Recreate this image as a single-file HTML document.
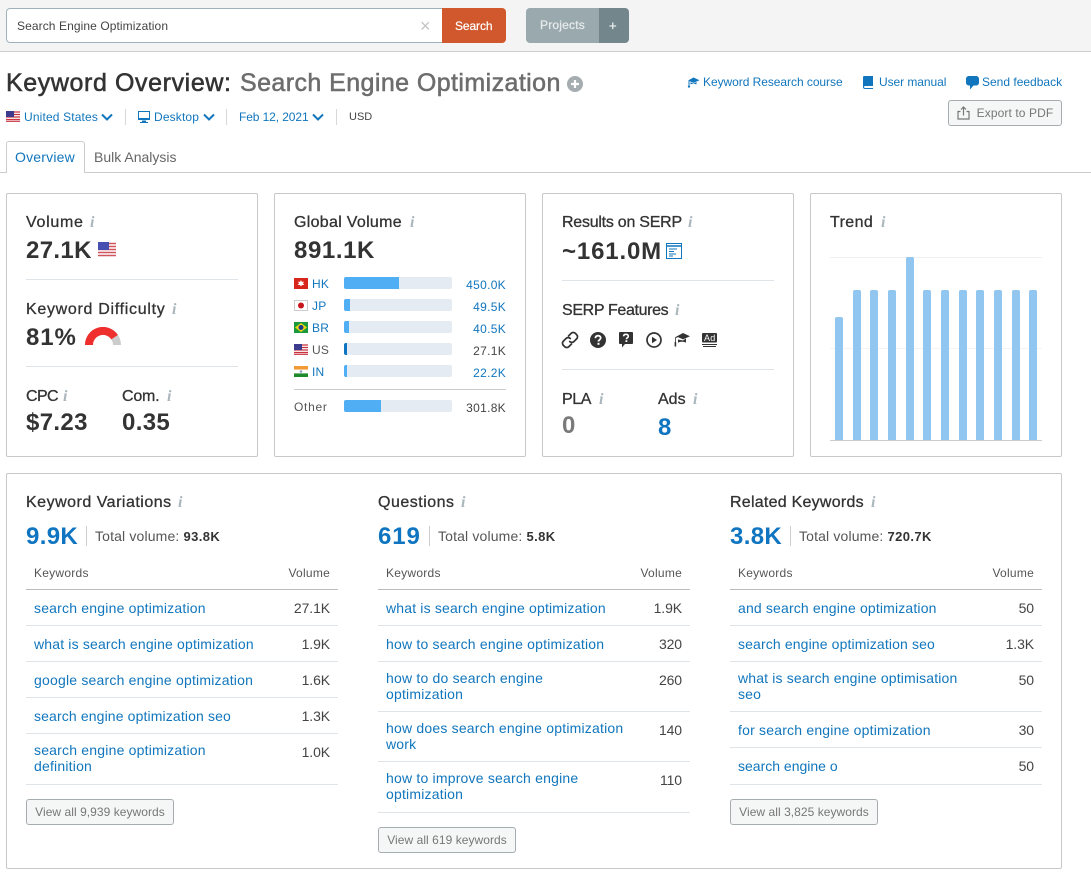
<!DOCTYPE html>
<html><head><meta charset="utf-8"><style>
html,body{margin:0;padding:0;background:#fff}
body{position:relative;width:1091px;height:874px;overflow:hidden;font-family:"Liberation Sans",sans-serif;color:#333}
.a{position:absolute;box-sizing:border-box}
.t{position:absolute;white-space:nowrap;line-height:16px;font-size:14px;letter-spacing:.2px}
.h{font-size:16px;letter-spacing:.55px;color:#333;-webkit-text-stroke:.3px #333}
.b{font-size:24px;font-weight:bold;line-height:28px;letter-spacing:.35px;color:#333}
.i{position:absolute;font:italic bold 16px/16px "Liberation Serif",serif;color:#a9b6bb}
.c{position:absolute;box-sizing:border-box;background:#fff;border:1px solid #c8c8c8;border-radius:2px}
.d{position:absolute;height:1px;background:#dfe4e8}
.n{font-size:12px;letter-spacing:.3px;text-align:right;width:70px;color:#444}
.r{text-align:right;width:60px;color:#444}
.k{font-size:12px;letter-spacing:.25px;color:#555}
.l,.n.l{color:#1176bd}
.tr{position:absolute;left:344px;width:108px;height:12px;background:#e5ebf2;border-radius:2px;overflow:hidden}
.tr i{display:block;height:12px;background:#50aef4}
.bar{position:absolute;width:8px;background:#90c6ef;border-radius:2px 2px 0 0;bottom:434px}
.btn{position:absolute;box-sizing:border-box;height:26px;border:1px solid #a5adb0;border-radius:3px;background:#f5f6f6;color:#777;font-size:12px;letter-spacing:.05px;line-height:24px;text-align:center;white-space:nowrap}
svg{position:absolute;display:block}
</style></head><body>

<div class="a" style="left:0;top:0;width:1091px;height:52px;background:#f4f4f4;border-bottom:1px solid #cfcfcf"></div>
<div class="a" style="left:6px;top:8px;width:440px;height:35px;background:#fff;border:1px solid #9fb2bc;border-radius:4px 0 0 4px"></div>
<div class="t" style="left:17px;top:18px;font-size:12px;letter-spacing:.09px;color:#444">Search Engine Optimization</div>
<div class="t" style="left:420px;top:18px;font-size:18px;color:#c4c4c4;letter-spacing:0">×</div>
<div class="a" style="left:442px;top:8px;width:64px;height:35px;background:#d0582c;border-radius:0 4px 4px 0"></div>
<div class="t" style="left:455px;top:18px;font-size:12px;letter-spacing:-.1px;color:#fff;-webkit-text-stroke:.2px #fff">Search</div>
<div class="a" style="left:526px;top:8px;width:73px;height:35px;background:#9aa9ae;border-radius:4px 0 0 4px"></div>
<div class="a" style="left:599px;top:8px;width:30px;height:35px;background:#73868c;border-radius:0 4px 4px 0"></div>
<div class="t" style="left:540px;top:17px;font-size:12px;letter-spacing:.2px;color:#e6ebec;-webkit-text-stroke:.25px #e6ebec">Projects</div>
<div class="t" style="left:609px;top:18px;font-size:13px;color:#e6ebec;letter-spacing:0;-webkit-text-stroke:.3px #e6ebec">+</div>

<div class="t" style="left:6px;top:68px;font-size:25px;line-height:30px;letter-spacing:.6px;color:#333;-webkit-text-stroke:.55px #333">Keyword Overview:</div>
<div class="t" style="left:240px;top:68px;font-size:25px;line-height:30px;letter-spacing:.42px;color:#6d6d6d;-webkit-text-stroke:.55px #6d6d6d">Search Engine Optimization</div>
<svg style="left:567px;top:76px" width="16" height="16" viewBox="0 0 16 16"><circle cx="8" cy="8" r="8" fill="#a5adb0"/><path d="M8 4v8M4 8h8" stroke="#fff" stroke-width="2.2"/></svg>

<svg style="left:6px;top:111px" width="14" height="11" viewBox="0 0 14 11"><rect width="14" height="11" fill="#fff"/><path d="M0 1h14M0 3.500h14M0 6h14M0 8.500h14M0 10.300h14" stroke="#c8313e" stroke-width="1.200"/><rect width="8" height="6" fill="#3c3b8e"/></svg>
<div class="t l" style="left:24px;top:109px;font-size:12px;letter-spacing:.15px">United States</div>
<svg style="left:101px;top:113px" width="12" height="8" viewBox="0 0 12 8"><path d="M1 1.500l5 5 5-5" fill="none" stroke="#1176bd" stroke-width="2"/></svg>
<div class="a" style="left:125px;top:109px;width:1px;height:16px;background:#d8d8d8"></div>
<svg style="left:138px;top:111px" width="13" height="13" viewBox="0 0 13 13"><path d="M0 0h12v9H0z" fill="#1176bd"/><path d="M1 1h10v6H1z" fill="#fff"/><path d="M4 9.500h4V11h2v1H2v-1h2z" fill="#1176bd"/></svg>
<div class="t l" style="left:154px;top:109px;font-size:12px;letter-spacing:.15px">Desktop</div>
<svg style="left:203px;top:113px" width="12" height="8" viewBox="0 0 12 8"><path d="M1 1.500l5 5 5-5" fill="none" stroke="#1176bd" stroke-width="2"/></svg>
<div class="a" style="left:226px;top:109px;width:1px;height:16px;background:#d8d8d8"></div>
<div class="t l" style="left:239px;top:109px;font-size:12px;letter-spacing:-.1px">Feb 12, 2021</div>
<svg style="left:312px;top:113px" width="12" height="8" viewBox="0 0 12 8"><path d="M1 1.500l5 5 5-5" fill="none" stroke="#1176bd" stroke-width="2"/></svg>
<div class="a" style="left:336px;top:109px;width:1px;height:16px;background:#d8d8d8"></div>
<div class="t" style="left:349px;top:109px;font-size:11px;letter-spacing:0;color:#444">USD</div>

<svg style="left:687px;top:76px" width="13" height="13" viewBox="0 0 13 13"><path d="M6.500 1.500l6 2.700-6 2.700-4-1.800V9h-1V4.200z" fill="#1176bd"/><path d="M3.500 6.300v2.200c1-.8 5-.8 6 0V6L6.500 7.600z" fill="#1176bd"/><circle cx="2" cy="10.500" r="1.200" fill="#1176bd"/></svg>
<div class="t l" style="left:703px;top:74px;font-size:12px;letter-spacing:-.05px">Keyword Research course</div>
<svg style="left:863px;top:76px" width="11" height="13" viewBox="0 0 11 13"><path d="M1 0h9v10H2.200C1.300 10 1 10.500 1 11s.3 1 1.200 1H10v1H2C.8 13 0 12.200 0 11V1.500C0 .7.3 0 1 0z" fill="#1176bd"/></svg>
<div class="t l" style="left:879px;top:74px;font-size:12px;letter-spacing:-.06px">User manual</div>
<svg style="left:966px;top:76px" width="13" height="14" viewBox="0 0 13 14"><path d="M3 0h7c1.800 0 3 1.200 3 3v3.500c0 1.800-1.200 3-3 3H7.500L4 13.500V9.500H3C1.200 9.500 0 8.300 0 6.500V3C0 1.200 1.200 0 3 0z" fill="#1176bd"/></svg>
<div class="t l" style="left:982px;top:74px;font-size:12px;letter-spacing:0">Send feedback</div>
<div class="btn" style="left:948px;top:100px;width:114px;padding-left:20px;letter-spacing:.1px">Export to PDF</div>
<svg style="left:957px;top:106px" width="13" height="14" viewBox="0 0 13 14" fill="none" stroke="#777" stroke-width="1.200"><path d="M3.500 5.500H1v7.500h11V5.500H9.500"/><path d="M6.500 9.500V1.500M4 3.500l2.500-2.500L9 3.500"/></svg>

<div class="a" style="left:0;top:172px;width:1091px;height:1px;background:#ccc"></div>
<div class="a" style="left:6px;top:141px;width:79px;height:32px;background:#fff;border:1px solid #ccc;border-bottom:0;border-radius:3px 3px 0 0"></div>
<div class="t l" style="left:15px;top:149px;font-size:14px;letter-spacing:.2px">Overview</div>
<div class="t" style="left:94px;top:149px;font-size:14px;letter-spacing:0;color:#666">Bulk Analysis</div>

<!-- Card 1 -->
<div class="c" style="left:6px;top:193px;width:252px;height:264px"></div>
<div class="t h" style="left:26px;top:215px;letter-spacing:.7px">Volume</div><div class="i" style="left:90px;top:215px">i</div>
<div class="t b" style="left:26px;top:237px">27.1K</div>
<svg style="left:98px;top:242px" width="18" height="15" viewBox="0 0 18 15"><rect width="18" height="15" fill="#fff"/><path d="M0 1.500h18M0 4.500h18M0 7.500h18M0 10.500h18M0 13.500h18" stroke="#d0555f" stroke-width="1.500"/><rect x="0" width="11" height="8" fill="#4750b0"/></svg>
<div class="d" style="left:26px;top:279px;width:212px"></div>
<div class="t h" style="left:26px;top:302px;letter-spacing:.7px">Keyword Difficulty</div><div class="i" style="left:172px;top:302px">i</div>
<div class="t b" style="left:26px;top:324px;letter-spacing:.9px">81%</div>
<svg style="left:85px;top:327px" width="36" height="18" viewBox="0 0 36 18" fill="none" stroke-width="8"><path d="M4 18A14 14 0 0 1 32 18" stroke="#ccc"/><path d="M4 18A14 14 0 0 1 29.600 10.100" stroke="#ef2e2e"/></svg>
<div class="d" style="left:26px;top:366px;width:212px"></div>
<div class="t h" style="left:26px;top:389px;letter-spacing:-.6px">CPC</div><div class="i" style="left:63px;top:389px">i</div>
<div class="t h" style="left:122px;top:389px;letter-spacing:-.2px">Com.</div><div class="i" style="left:167px;top:389px">i</div>
<div class="t b" style="left:26px;top:409px">$7.23</div>
<div class="t b" style="left:122px;top:409px">0.35</div>

<!-- Card 2 -->
<div class="c" style="left:274px;top:193px;width:252px;height:264px"></div>
<div class="t h" style="left:294px;top:215px;letter-spacing:.3px">Global Volume</div><div class="i" style="left:410px;top:215px">i</div>
<div class="t b" style="left:294px;top:237px;letter-spacing:.6px">891.1K</div>

<svg style="left:294px;top:278px" width="14" height="11" viewBox="0 0 14 11"><rect width="14" height="11" fill="#d7261c"/><path d="M7 2l1 2 2-.5-1 2 1.500 1.500-2.500 0-1 1.500-1-1.500-2.500 0L5 5.500l-1-2 2 .5z" fill="#fff"/></svg>
<div class="t l" style="left:312px;top:276px;font-size:12px">HK</div>
<div class="tr" style="top:277px"><i style="width:55px"></i></div>
<div class="t n l" style="left:436px;top:277px">450.0K</div>

<svg style="left:294px;top:300px" width="14" height="11" viewBox="0 0 14 11"><rect x=".5" y=".5" width="13" height="10" fill="#fff" stroke="#ccc"/><circle cx="7" cy="5.500" r="3" fill="#c9161d"/></svg>
<div class="t l" style="left:312px;top:298px;font-size:12px">JP</div>
<div class="tr" style="top:299px"><i style="width:6px"></i></div>
<div class="t n l" style="left:436px;top:299px">49.5K</div>

<svg style="left:294px;top:322px" width="14" height="11" viewBox="0 0 14 11"><rect width="14" height="11" fill="#1a9a3c"/><path d="M7 1l6 4.500L7 10 1 5.500z" fill="#f4d90f"/><circle cx="7" cy="5.500" r="2.500" fill="#1f3a8a"/></svg>
<div class="t l" style="left:312px;top:320px;font-size:12px">BR</div>
<div class="tr" style="top:321px"><i style="width:5px"></i></div>
<div class="t n l" style="left:436px;top:321px">40.5K</div>

<svg style="left:294px;top:344px" width="14" height="11" viewBox="0 0 14 11"><rect width="14" height="11" fill="#fff"/><path d="M0 1h14M0 3.500h14M0 6h14M0 8.500h14M0 10.300h14" stroke="#c8313e" stroke-width="1.200"/><rect width="8" height="6" fill="#3c3b8e"/></svg>
<div class="t" style="left:312px;top:342px;font-size:12px;color:#555">US</div>
<div class="tr" style="top:343px"><i style="width:3px;background:#0f75c0"></i></div>
<div class="t n" style="left:436px;top:343px">27.1K</div>

<svg style="left:294px;top:366px" width="14" height="11" viewBox="0 0 14 11"><rect width="14" height="3.700" fill="#f29a33"/><rect y="3.700" width="14" height="3.700" fill="#fff"/><rect y="7.400" width="14" height="3.600" fill="#1f8a2c"/><circle cx="7" cy="5.500" r="1.300" fill="#8fa0c8"/></svg>
<div class="t l" style="left:312px;top:364px;font-size:12px">IN</div>
<div class="tr" style="top:365px"><i style="width:3px"></i></div>
<div class="t n l" style="left:436px;top:365px">22.2K</div>

<div class="d" style="left:294px;top:389px;width:212px;background:#ccc"></div>
<div class="t" style="left:294px;top:399px;font-size:12px;letter-spacing:.7px;color:#555">Other</div>
<div class="tr" style="top:400px"><i style="width:37px"></i></div>
<div class="t n" style="left:436px;top:400px">301.8K</div>

<!-- Card 3 -->
<div class="c" style="left:542px;top:193px;width:252px;height:264px"></div>
<div class="t h" style="left:562px;top:215px;letter-spacing:-.25px">Results on SERP</div><div class="i" style="left:688px;top:215px">i</div>
<div class="t b" style="left:562px;top:238px;letter-spacing:.85px">~161.0M</div>
<svg style="left:666px;top:243px" width="16" height="16" viewBox="0 0 16 16" fill="none" stroke="#1176bd"><rect x=".5" y=".5" width="15" height="15"/><path d="M0 3h16" stroke-width="1.500"/><path d="M3 6h8M3 8.500h5M3 11h7M3 13h4"/></svg>
<div class="d" style="left:562px;top:280px;width:212px"></div>
<div class="t h" style="left:562px;top:303px;letter-spacing:-.35px">SERP Features</div><div class="i" style="left:675px;top:303px">i</div>
<!-- SERP icons -->
<svg style="left:561px;top:331px" width="18" height="18" viewBox="0 0 18 18" fill="none" stroke="#333" stroke-width="1.700" stroke-linecap="round"><path d="M7.500 5l2.600-2.600a3 3 0 0 1 4.300 0l1.200 1.200a3 3 0 0 1 0 4.300L13 10.500a3 3 0 0 1-4.300 0"/><path d="M10.500 13l-2.600 2.600a3 3 0 0 1-4.300 0l-1.200-1.200a3 3 0 0 1 0-4.300L5 7.500a3 3 0 0 1 4.300 0"/></svg>
<svg style="left:590px;top:332px" width="16" height="16" viewBox="0 0 16 16"><circle cx="8" cy="8" r="8" fill="#333"/><path d="M5.400 6.200C5.500 4.600 6.600 3.700 8.100 3.700c1.500 0 2.600.9 2.600 2.200 0 1.900-2.200 1.900-2.200 3.600" fill="none" stroke="#fff" stroke-width="1.800"/><rect x="7.500" y="10.800" width="2" height="2" fill="#fff"/></svg>
<svg style="left:619px;top:332px" width="14" height="16" viewBox="0 0 14 16"><path d="M1 0h12c.6 0 1 .4 1 1v10c0 .6-.4 1-1 1H6l-3 3.500V12H1c-.6 0-1-.4-1-1V1c0-.6.4-1 1-1z" fill="#333"/><path d="M4.600 4.300C4.700 3 5.600 2.300 7 2.300c1.300 0 2.300.7 2.300 1.900 0 1.600-1.900 1.600-1.900 3" fill="none" stroke="#fff" stroke-width="1.600"/><rect x="6.500" y="8.200" width="1.800" height="1.800" fill="#fff"/></svg>
<svg style="left:646px;top:332px" width="16" height="16" viewBox="0 0 16 16"><circle cx="8" cy="8" r="7" fill="none" stroke="#333" stroke-width="1.700"/><path d="M6 4.800l5 3.200-5 3.200z" fill="#333"/></svg>
<svg style="left:674px;top:333px" width="16" height="15" viewBox="0 0 16 15"><path d="M9 0l7 3.200-7 3.200-5-2.300L1.800 5v4.500h-.8V4.600L2 3.700z" fill="#333"/><path d="M4 6.500v3.200c2-1.300 6-1.300 8 0V5.400L9 7.500z" fill="#333"/><path d="M1.400 9v4.500" stroke="#333" stroke-width="1.600"/></svg>
<svg style="left:702px;top:333px" width="15" height="14" viewBox="0 0 15 14"><rect width="15" height="9.500" rx="1" fill="#333"/><path d="M0 11.500h15M1 13.500h13" stroke="#333"/></svg>
<div class="t" style="left:704px;top:330px;font-size:9px;color:#fff;letter-spacing:.2px">Ad</div>
<div class="d" style="left:562px;top:369px;width:212px"></div>
<div class="t h" style="left:562px;top:392px;letter-spacing:-.4px">PLA</div><div class="i" style="left:599px;top:392px">i</div>
<div class="t h" style="left:658px;top:392px;letter-spacing:0">Ads</div><div class="i" style="left:693px;top:392px">i</div>
<div class="t b" style="left:562px;top:412px;color:#7a7a7a">0</div>
<div class="t b" style="left:658px;top:414px;color:#0f75c0">8</div>

<!-- Card 4 -->
<div class="c" style="left:810px;top:193px;width:252px;height:264px"></div>
<div class="t h" style="left:830px;top:215px;letter-spacing:.4px">Trend</div><div class="i" style="left:881px;top:215px">i</div>
<div class="d" style="left:830px;top:257px;width:212px;background:#eef0f2"></div>
<div class="d" style="left:830px;top:348px;width:212px;background:#f3f4f5"></div>
<div class="bar" style="left:835px;height:123px"></div>
<div class="bar" style="left:853px;height:150px"></div>
<div class="bar" style="left:870px;height:150px"></div>
<div class="bar" style="left:888px;height:150px"></div>
<div class="bar" style="left:906px;height:183px"></div>
<div class="bar" style="left:923px;height:150px"></div>
<div class="bar" style="left:941px;height:150px"></div>
<div class="bar" style="left:959px;height:150px"></div>
<div class="bar" style="left:976px;height:150px"></div>
<div class="bar" style="left:994px;height:150px"></div>
<div class="bar" style="left:1012px;height:150px"></div>
<div class="bar" style="left:1029px;height:150px"></div>
<div class="d" style="left:830px;top:440px;width:212px;background:#ccc"></div>

<!-- Lower card -->
<div class="c" style="left:6px;top:473px;width:1056px;height:396px"></div>

<!-- Keyword Variations -->
<div class="t h" style="left:26px;top:495px;letter-spacing:.5px">Keyword Variations</div><div class="i" style="left:178px;top:495px">i</div>
<div class="t b" style="left:26px;top:523px;color:#0f75c0">9.9K</div>
<div class="a" style="left:86px;top:526px;width:1px;height:20px;background:#ccc"></div>
<div class="t" style="left:95px;top:528px;font-size:14px;letter-spacing:.15px;color:#555">Total volume: <b style="color:#333;font-size:13px;letter-spacing:.4px">93.8K</b></div>
<div class="t k" style="left:34px;top:565px">Keywords</div>
<div class="t k r" style="left:270px;top:565px">Volume</div>
<div class="d" style="left:26px;top:589px;width:312px;background:#bbb"></div>
<div class="t l" style="left:34px;top:600px;letter-spacing:.2px">search engine optimization</div><div class="t r" style="left:270px;top:600px;letter-spacing:-.1px">27.1K</div>
<div class="d" style="left:26px;top:625px;width:312px"></div>
<div class="t l" style="left:34px;top:636px;letter-spacing:.17px">what is search engine optimization</div><div class="t r" style="left:270px;top:636px;letter-spacing:-.1px">1.9K</div>
<div class="d" style="left:26px;top:661px;width:312px"></div>
<div class="t l" style="left:34px;top:672px">google search engine optimization</div><div class="t r" style="left:270px;top:672px;letter-spacing:-.1px">1.6K</div>
<div class="d" style="left:26px;top:697px;width:312px"></div>
<div class="t l" style="left:34px;top:708px;letter-spacing:.13px">search engine optimization seo</div><div class="t r" style="left:270px;top:708px;letter-spacing:-.1px">1.3K</div>
<div class="d" style="left:26px;top:733px;width:312px"></div>
<div class="t l" style="left:34px;top:742px">search engine optimization<br>definition</div><div class="t r" style="left:270px;top:744px;letter-spacing:-.1px">1.0K</div>
<div class="d" style="left:26px;top:784px;width:312px"></div>
<div class="btn" style="left:26px;top:799px;width:148px">View all 9,939 keywords</div>

<!-- Questions -->
<div class="t h" style="left:378px;top:495px;letter-spacing:.5px">Questions</div><div class="i" style="left:461px;top:495px">i</div>
<div class="t b" style="left:378px;top:523px;color:#0f75c0;letter-spacing:.9px">619</div>
<div class="a" style="left:429px;top:526px;width:1px;height:20px;background:#ccc"></div>
<div class="t" style="left:438px;top:528px;font-size:14px;letter-spacing:.15px;color:#555">Total volume: <b style="color:#333;font-size:13px;letter-spacing:.4px">5.8K</b></div>
<div class="t k" style="left:386px;top:565px">Keywords</div>
<div class="t k r" style="left:622px;top:565px">Volume</div>
<div class="d" style="left:378px;top:589px;width:312px;background:#bbb"></div>
<div class="t l" style="left:386px;top:600px;letter-spacing:.17px">what is search engine optimization</div><div class="t r" style="left:622px;top:600px;letter-spacing:-.1px">1.9K</div>
<div class="d" style="left:378px;top:625px;width:312px"></div>
<div class="t l" style="left:386px;top:636px">how to search engine optimization</div><div class="t r" style="left:622px;top:636px;letter-spacing:-.1px">320</div>
<div class="d" style="left:378px;top:661px;width:312px"></div>
<div class="t l" style="left:386px;top:670px">how to do search engine<br>optimization</div><div class="t r" style="left:622px;top:672px;letter-spacing:-.1px">260</div>
<div class="d" style="left:378px;top:711px;width:312px"></div>
<div class="t l" style="left:386px;top:720px">how does search engine optimization<br>work</div><div class="t r" style="left:622px;top:722px;letter-spacing:-.1px">140</div>
<div class="d" style="left:378px;top:761px;width:312px"></div>
<div class="t l" style="left:386px;top:770px">how to improve search engine<br>optimization</div><div class="t r" style="left:622px;top:772px;letter-spacing:-.1px">110</div>
<div class="d" style="left:378px;top:812px;width:312px"></div>
<div class="btn" style="left:378px;top:827px;width:138px">View all 619 keywords</div>

<!-- Related -->
<div class="t h" style="left:730px;top:495px;letter-spacing:.25px">Related Keywords</div><div class="i" style="left:871px;top:495px">i</div>
<div class="t b" style="left:730px;top:523px;color:#0f75c0">3.8K</div>
<div class="a" style="left:790px;top:526px;width:1px;height:20px;background:#ccc"></div>
<div class="t" style="left:799px;top:528px;font-size:14px;letter-spacing:.15px;color:#555">Total volume: <b style="color:#333;font-size:13px;letter-spacing:.4px">720.7K</b></div>
<div class="t k" style="left:738px;top:565px">Keywords</div>
<div class="t k r" style="left:974px;top:565px">Volume</div>
<div class="d" style="left:730px;top:589px;width:312px;background:#bbb"></div>
<div class="t l" style="left:738px;top:600px;letter-spacing:.16px">and search engine optimization</div><div class="t r" style="left:974px;top:600px;letter-spacing:-.1px">50</div>
<div class="d" style="left:730px;top:625px;width:312px"></div>
<div class="t l" style="left:738px;top:636px;letter-spacing:.13px">search engine optimization seo</div><div class="t r" style="left:974px;top:636px;letter-spacing:-.1px">1.3K</div>
<div class="d" style="left:730px;top:661px;width:312px"></div>
<div class="t l" style="left:738px;top:670px;letter-spacing:.16px">what is search engine optimisation<br>seo</div><div class="t r" style="left:974px;top:672px;letter-spacing:-.1px">50</div>
<div class="d" style="left:730px;top:711px;width:312px"></div>
<div class="t l" style="left:738px;top:722px">for search engine optimization</div><div class="t r" style="left:974px;top:722px;letter-spacing:-.1px">30</div>
<div class="d" style="left:730px;top:747px;width:312px"></div>
<div class="t l" style="left:738px;top:758px;letter-spacing:0">search engine o</div><div class="t r" style="left:974px;top:758px;letter-spacing:-.1px">50</div>
<div class="d" style="left:730px;top:784px;width:312px"></div>
<div class="btn" style="left:730px;top:799px;width:148px">View all 3,825 keywords</div>

</body></html>
